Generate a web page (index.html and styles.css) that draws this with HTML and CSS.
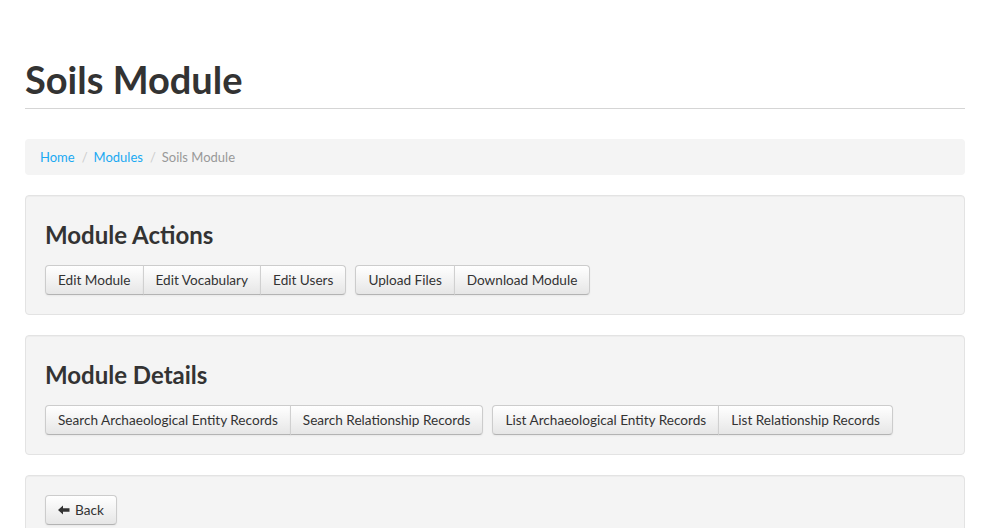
FILE: index.html
```html
<!DOCTYPE html>
<html>
<head>
<meta charset="utf-8">
<link rel="stylesheet" href="styles.css">
</head>
<body>
<div class="container">
  <div class="page-header">
    <h1>Soils Module</h1>
  </div>
  <ul class="breadcrumb">
    <li><a href="#">Home</a><span class="divider">/</span></li>
    <li><a href="#">Modules</a><span class="divider">/</span></li>
    <li class="active">Soils Module</li>
  </ul>
  <div class="well">
    <h2>Module Actions</h2>
    <div class="btn-toolbar">
      <div class="btn-group">
        <a class="btn" href="#">Edit Module</a>
        <a class="btn" href="#">Edit Vocabulary</a>
        <a class="btn" href="#">Edit Users</a>
      </div>
      <div class="btn-group">
        <a class="btn" href="#">Upload Files</a>
        <a class="btn" href="#">Download Module</a>
      </div>
    </div>
  </div>
  <div class="well">
    <h2>Module Details</h2>
    <div class="btn-toolbar">
      <div class="btn-group">
        <a class="btn" href="#">Search Archaeological Entity Records</a>
        <a class="btn" href="#">Search Relationship Records</a>
      </div>
      <div class="btn-group">
        <a class="btn" href="#">List Archaeological Entity Records</a>
        <a class="btn" href="#">List Relationship Records</a>
      </div>
    </div>
  </div>
  <div class="well">
    <a class="btn btn-back" href="#"><svg class="icon" width="12" height="10" viewBox="0 0 12 10"><path d="M0 5 L5 0.5 L5 3.2 L11.5 3.2 L11.5 6.8 L5 6.8 L5 9.5 Z" fill="#333"/></svg>Back</a>
  </div>
</div>
</body>
</html>
```
FILE: styles.css
```css
* { box-sizing: border-box; }
html, body { margin: 0; padding: 0; }
body {
  background: #fff;
  color: #333;
  font-family: Lato, "Liberation Sans", sans-serif;
  font-size: 14px;
  line-height: 20px;
  padding: 59px 2px 0 0;
}
.container {
  width: 940px;
  margin: 0 auto;
}
.page-header {
  padding-bottom: 9px;
  margin: 0 0 30px;
  border-bottom: 1px solid #d5d5d5;
}
h1 {
  margin: 0;
  font-size: 38px;
  line-height: 40px;
  font-weight: 700;
  color: #333;
}
.breadcrumb {
  list-style: none;
  margin: 0 0 20px;
  padding: 8px 15px;
  background: #f4f4f4;
  border-radius: 4px;
  font-size: 13px;
  line-height: 20px;
  display: flex;
}
.breadcrumb a {
  color: #1aa9f2;
  text-decoration: none;
}
.breadcrumb .divider {
  color: #ccc;
  padding: 0 6px 0 7px;
}
.breadcrumb .active { color: #999; }
.well {
  background: #f4f4f4;
  border: 1px solid #e3e3e3;
  border-radius: 4px;
  padding: 19px;
  margin-bottom: 20px;
  box-shadow: inset 0 1px 1px rgba(0,0,0,0.03);
}
h2 {
  margin: 0 0 10px;
  font-size: 24px;
  line-height: 40px;
  font-weight: 700;
}
.btn-toolbar {
  display: flex;
  gap: 9px;
}
.btn-group { display: flex; }
.btn {
  display: inline-flex;
  align-items: center;
  height: 30px;
  padding: 4px 12px;
  font-size: 13.6px;
  line-height: 20px;
  color: #333;
  text-decoration: none;
  background: linear-gradient(#ffffff, #e6e6e6);
  border: 1px solid #cccccc;
  border-bottom-color: #b3b3b3;
  box-shadow: inset 0 1px 0 rgba(255,255,255,0.2), 0 1px 2px rgba(0,0,0,0.05);
}
.btn-group .btn + .btn { border-left-color: #d0d0d0; margin-left: -1px; }
.btn-group .btn:first-child { border-radius: 4px 0 0 4px; }
.btn-group .btn:last-child { border-radius: 0 4px 4px 0; }
.btn-back { border-radius: 4px; }
.icon { margin-right: 5px; }
```
